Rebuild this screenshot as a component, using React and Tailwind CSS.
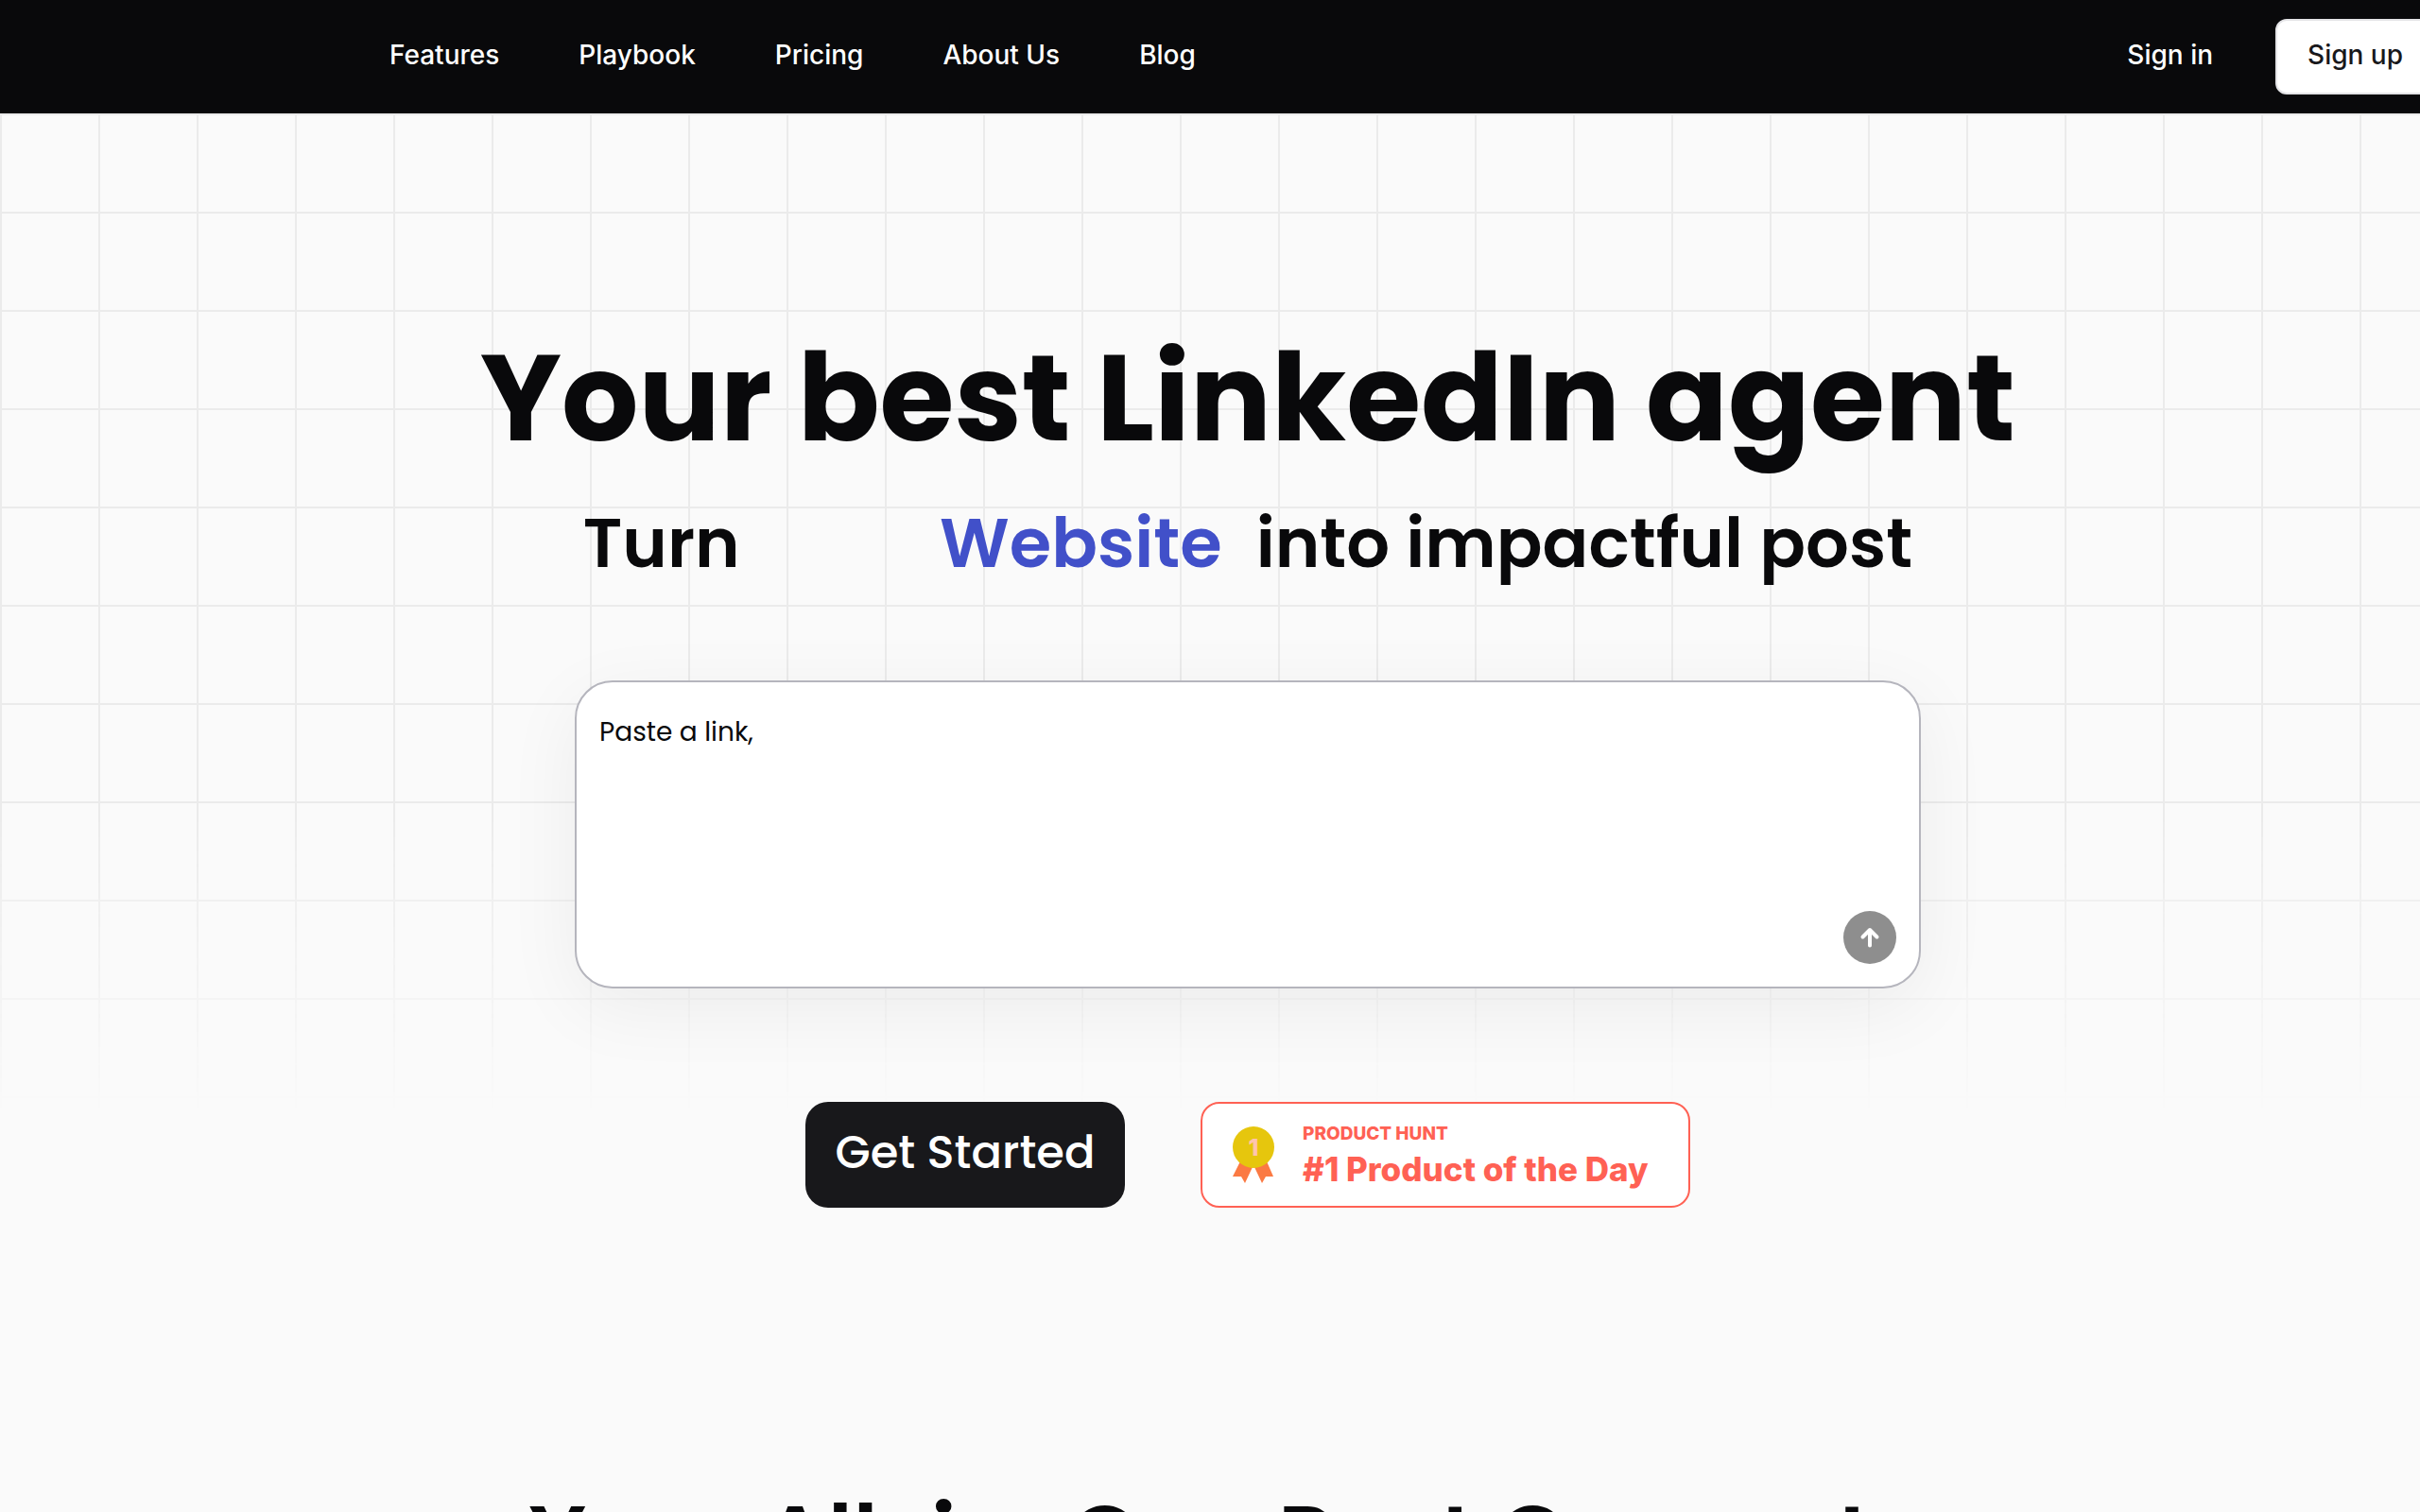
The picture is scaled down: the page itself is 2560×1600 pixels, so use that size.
const navLinks = ['Features', 'Playbook', 'Pricing', 'About Us', 'Blog'];

function Navbar() {
    return (
        <header className="h-[120px] w-full overflow-hidden bg-[#09090b] font-['Inter',sans-serif] text-white">
            <div className="mr-[-16px] flex h-full items-center justify-between pl-[412px]">
                <nav className="flex items-center gap-[84px] pb-1">
                    {navLinks.map((item) => (
                        <a key={item} href="#" className="text-[28px] leading-[40px] font-medium">{item}</a>
                    ))}
                </nav>
                <div className="flex items-center gap-[66px]">
                    <a href="#" className="pb-1 text-[28px] leading-[40px] font-medium">Sign in</a>
                    <a href="#" className="flex h-20 items-center rounded-xl border-2 border-[#e4e4e7] bg-white px-8 pb-1 text-[28px] leading-[40px] font-medium text-[#18181b]">Sign up</a>
                </div>
            </div>
        </header>
    );
}

function Medal() {
    return (
        <svg viewBox="0 0 44 62" className="h-[62px] w-[44px] shrink-0" aria-hidden="true">
            <path d="M8 38 L0 54 L9 54 L13 61 L21 44 Z" fill="#fb7a43" />
            <path d="M36 38 L43 54 L35 54 L31 61 L23 44 Z" fill="#fb7a43" />
            <circle cx="22" cy="23" r="22" fill="#e6c60d" />
            <text x="22" y="32" textAnchor="middle" fontFamily="Inter, sans-serif" fontSize="25" fontWeight="800" fill="#ffc4ae">1</text>
        </svg>
    );
}

export default function App() {
    return (
        <div className="min-h-screen overflow-hidden bg-[#fafafa] font-['Poppins','Inter',sans-serif] text-[#09090b]">
            <Navbar />

            <main className="relative pl-20">
                {/* grid background */}
                <div className="pointer-events-none absolute inset-x-0 top-0 h-[1060px] bg-[linear-gradient(to_right,#ebebeb_2px,transparent_2px),linear-gradient(to_bottom,#ebebeb_2px,transparent_2px)] bg-[size:104px_104px] mask-[linear-gradient(to_bottom,#000_70%,transparent_100%)]"></div>

                <section className="relative flex flex-col items-center">
                    <h1 className="mt-[238px] text-[128px] leading-[128px] font-bold whitespace-nowrap">Your best LinkedIn agent</h1>

                    <h2 className="mt-[39px] flex h-[100px] items-center text-[72px] leading-[100px] font-semibold whitespace-nowrap">
                        <span>Turn</span>
                        <span className="w-[510px] text-right text-[#4150c9]">Website</span>
                        <span className="ml-[36px]">into impactful post</span>
                    </h2>

                    <form className="mt-[95px] flex h-[326px] w-[1424px] flex-col rounded-[40px] border-2 border-[#b5b5bd] bg-white shadow-[0_20px_80px_rgba(0,0,0,0.06)]">
                        <textarea aria-label="Paste a link" defaultValue="Paste a link," className="w-full flex-1 resize-none bg-transparent px-6 pt-8 text-[28px] leading-[42px] outline-none" />
                        <div className="flex justify-end pr-6 pb-6">
                            <button type="button" aria-label="Send" className="flex size-14 items-center justify-center rounded-full bg-[#8e8e8e] text-white">
                                <svg viewBox="0 0 32 32" className="size-8" fill="none" stroke="currentColor" strokeWidth="4" strokeLinecap="round" strokeLinejoin="round">
                                    <path d="M16 24.500V8M8.500 15.500L16 8l7.500 7.500" />
                                </svg>
                            </button>
                        </div>
                    </form>

                    <div className="mt-[120px] flex gap-20">
                        <button type="button" className="h-28 w-[338px] rounded-3xl bg-[#18181b] pb-1 text-[48px] leading-[56px] font-medium text-white">Get Started</button>
                        <a href="#" className="flex h-28 w-[518px] items-center rounded-[20px] border-2 border-[#ff6154] bg-white pl-8 font-['Inter',sans-serif] text-[#ff6154]">
                            <Medal />
                            <span className="ml-[30px] flex flex-col pt-1">
                                <span className="text-[19px] leading-[26px] font-extrabold">PRODUCT HUNT</span>
                                <span className="text-[35px] leading-[48px] font-extrabold whitespace-nowrap">#1 Product of the Day</span>
                            </span>
                        </a>
                    </div>
                </section>

                <section className="relative flex justify-center pt-[294px]">
                    <h2 className="text-[96px] leading-[112px] font-semibold whitespace-nowrap">Your All-in-One Post Generator</h2>
                </section>
            </main>
        </div>
    );
}
